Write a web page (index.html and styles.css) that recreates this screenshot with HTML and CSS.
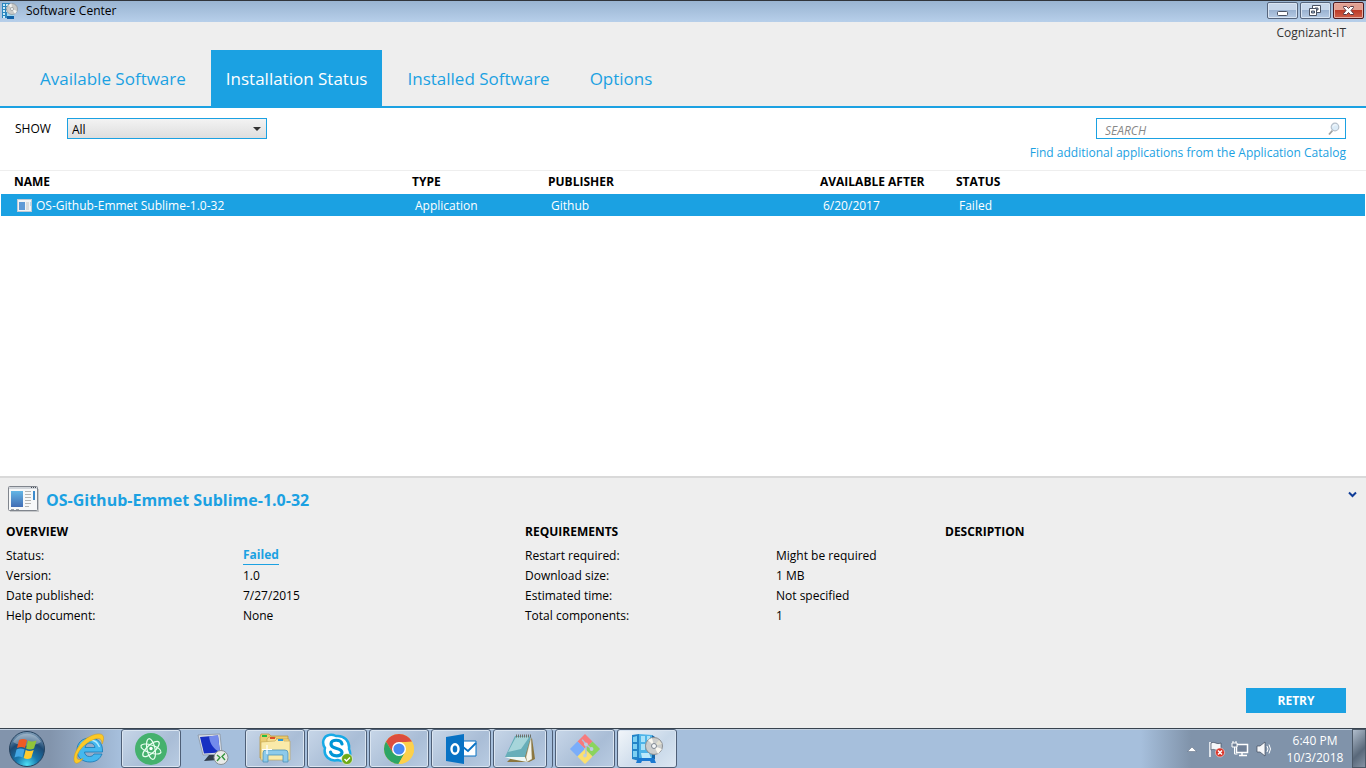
FILE: index.html
```html
<!DOCTYPE html>
<html lang="en">
<head>
<meta charset="utf-8">
<title>Software Center</title>
<link rel="stylesheet" href="styles.css">
</head>
<body>
<header class="titlebar">
  <svg class="titlebar-icon" viewBox="0 0 18 17" aria-hidden="true">
    <path d="M2 1h8v15H2z" fill="#2a86bf"/>
    <path d="M3 2h2v2H3zM6 2h2v2H6zM3 5h2v2H3zM6 5h2v2H6zM3 8h2v2H3zM6 8h2v2H6zM3 11h2v2H3zM3 14h2v2H3z" fill="#c9ecfa"/>
    <path d="M7 10h7v6h-2v-2H9v2H7z" fill="#9fd8f2"/>
    <path d="M7 14h7v3H7z" fill="#1161a6"/>
    <circle cx="12" cy="7" r="5.500" fill="#c9cac8" stroke="#8d9094" stroke-width=".7"/>
    <path d="M12 7L8.500 3l3-1.500zM12 7l5 2-2 3z" fill="#f4f4f0"/>
    <circle cx="12" cy="7" r="1.600" fill="#eef3f5" stroke="#8c8c8c" stroke-width=".6"/>
  </svg>
  <h1 class="titlebar-text">Software Center</h1>
  <div class="window-buttons">
    <button class="window-button" type="button" aria-label="Minimize">
      <svg viewBox="0 0 28 15"><rect x="9.500" y="8.500" width="10" height="4" rx="1" fill="#fff" stroke="#4b5363"/></svg>
    </button>
    <button class="window-button" type="button" aria-label="Restore">
      <svg viewBox="0 0 28 15"><g fill="#fff" stroke="#4b5363"><path d="M11.500 2.500h8v7h-8z"/><path d="M14 5h3v2h-3z" fill="#9ab0cc"/><path d="M8.500 5.500h7v7h-7z"/><path d="M10.500 8h3v2h-3z" fill="#9ab0cc"/></g></svg>
    </button>
    <button class="window-button window-close" type="button" aria-label="Close">
      <svg viewBox="0 0 28 15"><path d="M9.500 3.500h3l2 2 2-2h3v1L17 7.500l2.500 3v1h-3l-2-2-2 2h-3v-1l2.500-3-2.500-3z" fill="#fff" stroke="#5b3a44"/></svg>
    </button>
  </div>
</header>

<div class="banner">
  <p class="organization">Cognizant-IT</p>
  <nav class="tabs">
    <a class="tab" href="#available">Available Software</a>
    <a class="tab tab-active" href="#status" aria-current="page">Installation Status</a>
    <a class="tab" href="#installed">Installed Software</a>
    <a class="tab" href="#options">Options</a>
  </nav>
</div>

<main class="content">
  <div class="toolbar">
    <label class="show-label" for="show">SHOW</label>
    <div class="select-wrap">
      <select class="show-select" id="show"><option>All</option></select>
      <svg class="select-arrow" viewBox="0 0 8 4" aria-hidden="true"><path d="M0 0h8L4 4z" fill="#333"/></svg>
    </div>
    <div class="search-area">
      <div class="search-box">
        <input class="search-input" type="text" placeholder="SEARCH" aria-label="Search">
        <svg class="search-icon" viewBox="0 0 12 14" aria-hidden="true">
          <path d="M1 12.500L4.500 8.500" stroke="#a0a0a0" stroke-width="1.800"/>
          <circle cx="7" cy="5" r="3.800" fill="#dcecf8" stroke="#b5bfca" stroke-width="1.200"/>
          <path d="M5 4.500C5.500 3 7 2.500 8.500 3" stroke="#fff" fill="none"/>
        </svg>
      </div>
      <a class="catalog-link" href="#catalog">Find additional applications from the Application Catalog</a>
    </div>
  </div>

  <table class="software">
    <colgroup><col class="col-name"><col class="col-type"><col class="col-publisher"><col class="col-date"><col></colgroup>
    <thead>
      <tr><th>NAME</th><th>TYPE</th><th>PUBLISHER</th><th>AVAILABLE AFTER</th><th>STATUS</th></tr>
    </thead>
    <tbody>
      <tr>
        <td><div class="name-cell"><svg class="row-icon" viewBox="0 0 16 14" aria-hidden="true"><rect x=".5" y=".5" width="14" height="12" fill="#f3f4f5" stroke="#c3cad3"/><path d="M2 3h6v8H2z" fill="#5f9ad6"/><path d="M9 3h3v8H9z" fill="#dadcdd"/><path d="M13 3h1v4h-1z" fill="#b9dbee"/></svg>OS-Github-Emmet Sublime-1.0-32</div></td>
        <td>Application</td><td>Github</td><td>6/20/2017</td><td>Failed</td>
      </tr>
    </tbody>
  </table>
</main>

<section class="details">
  <div class="details-head">
    <svg class="app-icon" viewBox="0 0 32 27" aria-hidden="true">
      <defs><linearGradient id="panel" x2="0" y2="1"><stop stop-color="#63b5e5"/><stop offset="1" stop-color="#416cb4"/></linearGradient></defs>
      <path d="M2 3h29v23H2z" fill="#c6c8ca"/>
      <rect x=".5" y=".5" width="29" height="24" rx="1" fill="#f7f8f9" stroke="#80858d"/>
      <path d="M1 1h28v2H1z" fill="#d2d6db"/>
      <path d="M23 1h1v1h-1zM25 1h1v1h-1zM27 1h1v1h-1z" fill="#454b54"/>
      <path d="M3 5h12v16H3z" fill="url(#panel)"/>
      <path d="M17 5.500h6M17 8.500h6M17 11.500h6M17 14.500h6M17 17.500h6M17 20.500h4" stroke="#b4b4b2"/>
      <path d="M25 5h2v9h-2z" fill="#3c8bcd"/>
      <path d="M3 23.500h3M8 23.500h3" stroke="#9a9fa7"/>
    </svg>
    <h2 class="details-title">OS-Github-Emmet Sublime-1.0-32</h2>
    <button class="collapse" type="button" aria-label="Collapse details">
      <svg viewBox="0 0 9 7"><path d="M1 1.500l3.500 3.500L8 1.500" fill="none" stroke="#103d98" stroke-width="2"/></svg>
    </button>
  </div>
  <div class="details-columns">
    <section>
      <h3 class="group-title">OVERVIEW</h3>
      <dl class="facts">
        <dt>Status:</dt><dd><a class="failed-link" href="#failed">Failed</a></dd>
        <dt>Version:</dt><dd>1.0</dd>
        <dt>Date published:</dt><dd>7/27/2015</dd>
        <dt>Help document:</dt><dd>None</dd>
      </dl>
    </section>
    <section>
      <h3 class="group-title">REQUIREMENTS</h3>
      <dl class="facts facts-wide">
        <dt>Restart required:</dt><dd>Might be required</dd>
        <dt>Download size:</dt><dd>1 MB</dd>
        <dt>Estimated time:</dt><dd>Not specified</dd>
        <dt>Total components:</dt><dd>1</dd>
      </dl>
    </section>
    <section>
      <h3 class="group-title">DESCRIPTION</h3>
    </section>
  </div>
  <div class="actions"><button class="retry" type="button">RETRY</button></div>
</section>

<footer class="taskbar">
  <button class="start" type="button" aria-label="Start">
    <svg viewBox="0 0 38 38">
      <defs><radialGradient id="orb" cx=".5" cy=".95" r=".9"><stop stop-color="#4fe0f5"/><stop offset=".35" stop-color="#1878ad"/><stop offset=".7" stop-color="#1d4a74"/><stop offset="1" stop-color="#7898b4"/></radialGradient></defs>
      <circle cx="19" cy="19" r="17.500" fill="url(#orb)" stroke="#27435f"/>
      <path d="M5 12C11 1 27 1 33 12 25 17 13 17 5 12z" fill="#fff" opacity=".3"/>
      <path d="M11 10c3-1.500 5-1.500 8 0l-2 8c-2.500-1.500-5-1.500-8 0z" fill="#ee5a24"/>
      <path d="M20 10.500c2.500 1.300 5 1.300 8.500 0l-2.500 8c-2.700 1.300-5 1.300-8 0z" fill="#91c43a"/>
      <path d="M8.500 19.500c2.700-1.500 5.200-1.500 8 0l-2 8c-2.600-1.300-5-1.300-8 0z" fill="#43a7e4"/>
      <path d="M17.700 20c2.500 1.300 5 1.300 8 0l-2.500 8c-2.700 1.300-5 1.300-7.500 0z" fill="#ffcb2d"/>
    </svg>
  </button>
  <div class="tasks">
    <button class="task task-plain" type="button" aria-label="Internet Explorer">
      <svg viewBox="0 0 32 32">
        <path d="M17 5C9 5 4 10 4 17c0 8 6 12 13 12 6 0 10-3 12-8h-8c-1 1.800-2.500 2.500-4.500 2.500-3 0-4.700-1.700-5-4.500h18C30 10 25 5 17 5zm-5 9.500c.6-2.800 2.300-4.500 5-4.500s4.500 1.700 5 4.500z" fill="#45b8ee" stroke="#1678b5" stroke-width=".8"/>
        <path d="M7 13c2-4 5-6 10-6 5 0 8 3 9.500 7" fill="none" stroke="#b5ebff" stroke-width="1.300"/>
        <path d="M2.500 30C-2 26 4 12 14 5 21 .500 30-1 30.500 4c.3 2-.3 5-1.500 7 .3-5-2.500-7-8.500-4.500C10 11 3 21 4 25c.5 2 3 2 6 .5-3 4-6 5.500-7.500 4.500z" fill="#fbc928" stroke="#d39a10" stroke-width=".5"/>
      </svg>
    </button>
    <button class="task" type="button" aria-label="Atom">
      <svg viewBox="0 0 32 32"><circle cx="16" cy="16" r="16" fill="#45b16d"/><g fill="none" stroke="#e9fff0" stroke-width="1.200"><ellipse cx="16" cy="16" rx="4" ry="10.500" transform="rotate(-12 16 16)"/><ellipse cx="16" cy="16" rx="4" ry="10.500" transform="rotate(48 16 16)"/><ellipse cx="16" cy="16" rx="4" ry="10.500" transform="rotate(108 16 16)"/></g><circle cx="16" cy="15.500" r="1.700" fill="#fff"/></svg>
    </button>
    <button class="task task-plain" type="button" aria-label="Remote Desktop">
      <svg viewBox="0 0 32 32"><path d="M1 2l22-1 2 20-19 1z" fill="#d9dfe7" stroke="#838d99" stroke-width=".7"/><path d="M3 4l18-1.500 2 17-16 1z" fill="#172fc2"/><path d="M12 3.300l9-.8 2 17C17 16 13 12 12 3.300z" fill="#738bec"/><path d="M12 22h7l2 5-14 1z" fill="#313c4b"/><circle cx="24" cy="24.500" r="7" fill="#e9ebe9" stroke="#888e91"/><path d="M20 22l3 2.500-3 3.500M28 20.500l-3 3 3 3.500" fill="none" stroke="#33943c" stroke-width="1.400"/></svg>
    </button>
    <button class="task" type="button" aria-label="File Explorer">
      <svg viewBox="0 0 32 32"><path d="M1 4l1-3h8l2 2h17v22H1z" fill="#e9cb70" stroke="#b8943b" stroke-width=".7"/><path d="M3 2h5v2H3z" fill="#25bd42"/><path d="M8 6l2-2h6l2 2h12v17H8z" fill="#f5dc8c" stroke="#bd9a45" stroke-width=".6"/><path d="M11 4h5v2h-5z" fill="#de4d28"/><path d="M16 8l2-2h6l1 2h6v19H2V9z" fill="#faeaa9" stroke="#c3a24e" stroke-width=".6"/><path d="M19 6h5v2h-5z" fill="#2998dc"/><path d="M4 29V20q0-3 3-3h19q3 0 3 3v9h-5v-7H9v7z" fill="#8dcaea" stroke="#4d93b9" stroke-width=".8"/><path d="M8 12v9M3 16.500h10" stroke="#fff" stroke-width="1.200"/></svg>
    </button>
    <button class="task" type="button" aria-label="Skype for Business">
      <svg viewBox="0 0 32 32"><path d="M8 2c3-1 5 0 7 1 8-1 14 5 13 13 3 6 0 12-6 12-3 0-4-1-5-1C9 29 2 23 4 15 0 9 3 3 8 2z" fill="#fff" stroke="#18aae6" stroke-width="2.500"/><path d="M21 11c-1-5-11-5-11 0 0 6 11 3 11 8.500 0 4.500-10.500 4.500-11.500-.5" fill="none" stroke="#0096d6" stroke-width="3.200" stroke-linecap="round"/><circle cx="26" cy="26" r="5.500" fill="#6eaa16" stroke="#fff" stroke-width=".6"/><path d="M23.500 26l2 2 3.500-3.500" fill="none" stroke="#fff" stroke-width="1.400"/></svg>
    </button>
    <button class="task" type="button" aria-label="Chrome">
      <svg viewBox="0 0 32 32"><circle cx="16" cy="16" r="15" fill="#fcd04b"/><path d="M3 8.500A15 15 0 0 1 29 8.500L16 9.500 9.500 19.500z" fill="#dc4d3e"/><path d="M3 8.500A15 15 0 0 0 15.500 31L22 19.500H9.700z" fill="#2da566"/><path d="M16 9h13.300A15 15 0 0 1 15.500 31L22 19.500z" fill="#fcd04b"/><circle cx="16" cy="16" r="7" fill="#fff"/><circle cx="16" cy="16" r="5.600" fill="#4889f3"/></svg>
    </button>
    <button class="task" type="button" aria-label="Outlook">
      <svg viewBox="0 0 32 32"><path d="M16 8h15v15H16z" fill="#fff" stroke="#0872c4"/><path d="M18 14l5 4 8-8" fill="none" stroke="#0872c4" stroke-width="1.800"/><path d="M1 4l18-3v30L1 28z" fill="#0872c4"/><ellipse cx="10" cy="16" rx="3.500" ry="4.700" fill="none" stroke="#fff" stroke-width="2.400"/></svg>
    </button>
    <div class="task-stack">
      <button class="task" type="button" aria-label="Notepad">
        <svg viewBox="0 0 32 32"><path d="M28 5l3 21-6 3H3z" fill="#8b763e"/><path d="M27 4l1 22-5 3-1-5z" fill="#f7f5e9" stroke="#9d9983" stroke-width=".4"/><path d="M11 3h16l-6 21H1z" fill="#67aeb9"/><path d="M12 4l14-1-9 13L4 19z" fill="#c2e5e8" opacity=".7"/><path d="M1 24h20l2 5L7 26z" fill="#edf8f6"/><path d="M12 3h16" stroke="#6c6f69" stroke-width="3" stroke-dasharray="1 1"/></svg>
      </button>
    </div>
    <button class="task" type="button" aria-label="Git">
      <svg viewBox="0 0 34 34"><path d="M17 1l8 8-7 7h-2l-7-7z" fill="#f77b7d"/><path d="M9 9l7 7v2l-7 7-8-8z" fill="#7aadfa"/><path d="M25 9l8 8-8 8-7-7v-2z" fill="#8bd45e"/><path d="M17 17l8 8-8 8-8-8z" fill="#fbe06e"/><path d="M14 7l4 5v11M18 12l6 5" fill="none" stroke="#aec3de" stroke-width="1.500"/><circle cx="18" cy="12" r="2" fill="#bdcde2"/><circle cx="24" cy="17" r="2" fill="#bdcde2"/><circle cx="17" cy="24" r="2" fill="#bdcde2"/></svg>
    </button>
    <button class="task task-current" type="button" aria-label="Software Center">
      <svg viewBox="0 0 32 32"><path d="M1 2l7-1v27l-7-2z" fill="#2384c8"/><path d="M8 1l13 1v26H8z" fill="#4eb4e8"/><path d="M2 4l4-1v6H2zM2 11h4v5H2zM2 18h4v6H2z" fill="#7dd0f2"/><path d="M10 3h4v6h-4zM16 3h3v6h-3zM10 11h4v6h-4z" fill="#a9e2f8"/><path d="M21 2l3 2v22l-3 2z" fill="#1767a8"/><path d="M5 30l2-5h16l2 5h-5l-1-2h-8l-1 2z" fill="#1c79d1"/><path d="M10 20h8l2 5h-9z" fill="#bdeafb"/><circle cx="23" cy="13" r="8.500" fill="#cbcdcc" stroke="#8c8e91"/><path d="M23 13l-6-6 4-2zM23 13l8 3-4 5z" fill="#f9f7ef"/><path d="M23 13l5-6 3 4z" fill="#e3e0d1"/><circle cx="23" cy="13" r="2.500" fill="#f5f7f8" stroke="#7e8791"/></svg>
    </button>
  </div>
  <div class="tray">
    <button class="tray-button" type="button" aria-label="Show hidden icons"><svg viewBox="0 0 18 18"><path d="M4.500 11.500h9L9 7z" fill="#fff" stroke="#56657a" stroke-width=".5"/></svg></button>
    <button class="tray-button" type="button" aria-label="Action Center"><svg viewBox="0 0 18 18"><path d="M3 2v15" stroke="#fff" stroke-width="1.500"/><path d="M4 3c4-2 5 2 10 0v7c-5 2-6-2-10 0z" fill="#f6f8fa" stroke="#3f4b5c" stroke-width=".7"/><circle cx="13" cy="12.500" r="4.500" fill="#d93327" stroke="#fff" stroke-width=".5"/><path d="M11 10.500l4 4M15 10.500l-4 4" stroke="#fff" stroke-width="1.500"/></svg></button>
    <button class="tray-button" type="button" aria-label="Network"><svg viewBox="0 0 18 18"><path d="M5.500 4.500h11v8h-11z" fill="#718198" stroke="#fff" stroke-width="1.500"/><path d="M8 15.500h8M11 13v2" stroke="#fff" stroke-width="1.500"/><path d="M1 3h5v4H1z" fill="#718198" stroke="#fff"/><path d="M2 1v2M5 1v2M3.500 7v7h3" stroke="#fff" fill="none"/></svg></button>
    <button class="tray-button" type="button" aria-label="Volume"><svg viewBox="0 0 18 18"><path d="M2 6h3l5-4v14l-5-4H2z" fill="#f7f8fa" stroke="#3f4b5c" stroke-width=".7"/><path d="M12 6q2 3 0 6M14 4.500q3 4.500 0 9" fill="none" stroke="#fff"/></svg></button>
    <div class="clock"><time>6:40 PM</time><time datetime="2018-10-03">10/3/2018</time></div>
    <button class="show-desktop" type="button" aria-label="Show desktop"></button>
  </div>
</footer>
</body>
</html>
```
FILE: styles.css
```css
* { box-sizing: border-box; }

body {
  margin: 0;
  min-height: 100vh;
  display: flex;
  flex-direction: column;
  background: #fff;
  color: #000;
  font: 12px/20px "Open Sans", "Noto Sans", sans-serif;
}

h1, h2, h3, p, dl, dd { margin: 0; font-size: inherit; }
button { padding: 0; border: 0; background: none; font: inherit; }
svg { display: block; }
a { text-decoration: none; color: #1ba1e2; }

/* Window frame */
.titlebar {
  display: flex;
  align-items: center;
  height: 22px;
  border-top: 1px solid #30343a;
  background: linear-gradient(#99b4d1, #b7cfea);
}
.titlebar-icon { width: 18px; height: 17px; margin: 0 8px 2px 0; }
.titlebar-text { flex: 1; font-weight: 400; font-size: 12px; line-height: 18px; padding-bottom: 2px; }
.window-buttons { display: flex; gap: 2px; padding: 0 2px 2px 0; }
.window-button {
  width: 31px;
  height: 17px;
  border: 1px solid #56657c;
  border-radius: 2px;
  background: linear-gradient(#c6d6ea 45%, #9bb3d1 50%, #b6cbe4);
  box-shadow: inset 0 0 0 1px #d8e4f2;
}
.window-button svg { width: 28px; height: 15px; }
.window-close {
  border-color: #4d1a20;
  background: linear-gradient(#e2a092 45%, #bd3b28 50%, #cf604a);
  box-shadow: inset 0 0 0 1px #e8aea3;
}

/* Tabs */
.banner {
  background: #eee;
  border-bottom: 2px solid #1ba1e2;
}
.organization { height: 28px; padding: 1px 20px 0; text-align: right; color: #333; }
.tabs { display: flex; gap: 10px; padding-left: 25px; }
.tab { padding: 14px 15px 12px; font-size: 17px; line-height: 30px; }
.tab-active { background: #1ba1e2; color: #fff; }

/* List of software */
.content { flex: 1; }
.toolbar {
  display: flex;
  align-items: flex-start;
  padding: 10px 20px 7px 15px;
  border-bottom: 1px solid #eee;
}
.show-label { width: 52px; line-height: 22px; }
.select-wrap { position: relative; width: 200px; }
.show-select {
  appearance: none;
  display: block;
  width: 100%;
  height: 21px;
  padding: 1px 4px 0;
  border: 1px solid #1ba1e2;
  border-radius: 0;
  background: linear-gradient(#f3f3f3, #dedede);
  color: #000;
  font: inherit;
}
.select-arrow { position: absolute; top: 9px; right: 6px; width: 8px; height: 4px; pointer-events: none; }
.search-area { display: flex; flex-direction: column; align-items: flex-end; gap: 4px; margin-left: auto; }
.search-box {
  display: flex;
  align-items: center;
  width: 250px;
  height: 21px;
  padding-right: 5px;
  border: 1px solid #1ba1e2;
}
.search-input { flex: 1; min-width: 0; height: 19px; padding: 4px 8px 0; border: 0; outline: 0; background: none; font: inherit; }
.search-input::placeholder { color: #888; font-style: italic; opacity: 1; }
.search-icon { width: 12px; height: 14px; }

.software { width: calc(100% - 2px); margin: 0 1px; border-collapse: collapse; table-layout: fixed; }
.col-name { width: 398px; }
.col-type, .col-date { width: 136px; }
.col-publisher { width: 272px; }
.software th { height: 23px; padding: 0 13px 2px; text-align: left; line-height: 20px; }
.software td { height: 22px; padding: 1px 16px 0; background: #1ba1e2; color: #fff; line-height: 20px; }
.name-cell { display: flex; align-items: center; gap: 3px; }
.row-icon { width: 16px; height: 14px; }

/* Details of the selected item */
.details { border-top: 2px solid #d9d9d9; background: #eee; padding: 8px 6px 15px; }
.details-head { display: flex; align-items: flex-start; height: 30px; }
.app-icon { width: 32px; height: 27px; margin: 0 6px 0 2px; }
.details-title { flex: 1; font-size: 16px; line-height: 28px; color: #1ba1e2; }
.collapse { width: 9px; height: 7px; margin: 5px 3px 0 0; }
.details-columns { display: grid; grid-template-columns: 519fr 420fr 415fr; padding-top: 6px; min-height: 164px; }
.group-title { margin-bottom: 4px; }
.facts { display: grid; grid-template-columns: 237px 1fr; grid-auto-rows: 20px; }
.facts-wide { grid-template-columns: 251px 1fr; }
.failed-link { display: block; width: max-content; border-bottom: 1px solid #1ba1e2; font-weight: 700; line-height: 18px; }
.actions { display: flex; justify-content: flex-end; padding: 8px 14px 0; }
.retry { width: 100px; height: 25px; background: #1ba1e2; color: #fff; font-weight: 700; }

/* Taskbar */
.taskbar {
  display: flex;
  height: 40px;
  border-top: 1px solid #38434f;
  background: linear-gradient(90deg, #8294ac 50px, #a6bfdc 120px, #a6bfdc calc(100% - 225px), #8093aa calc(100% - 175px));
  box-shadow: inset 0 1px #c0cfe0;
}
.start { width: 38px; margin: 0 13px 0 8px; }
.start svg { width: 38px; height: 38px; }
.tasks { display: flex; gap: 2px; flex: 1; }
.task {
  display: flex;
  align-items: center;
  justify-content: center;
  width: 60px;
  height: 39px;
  border: 1px solid #4e5f77;
  border-radius: 3px;
  background: linear-gradient(135deg, #c7d6e8, #a9bdd6 60%, #b9cce2);
  box-shadow: inset 0 0 0 1px #dae5f1;
}
.task svg { width: 32px; height: 32px; }
.task-plain { border-color: transparent; background: none; box-shadow: none; }
.task-current { background: linear-gradient(135deg, #f2f6fa, #c8d8e9 60%, #dce7f2); }
.task-stack { width: 60px; padding-right: 5px; border-right: 1px solid #4e5f77; border-radius: 3px; }
.task-stack .task { width: 54px; }
.tray { display: flex; align-items: center; }
.tray-button { width: 24px; display: grid; place-items: center; }
.tray-button svg { width: 18px; height: 18px; }
.clock { display: grid; width: 74px; margin-left: 2px; text-align: center; color: #fff; line-height: 17px; }
.show-desktop {
  width: 14px;
  height: 39px;
  border: 1px solid #4c5968;
  background: linear-gradient(135deg, #b0bdcc, #59687a 60%, #8593a4);
}
```
